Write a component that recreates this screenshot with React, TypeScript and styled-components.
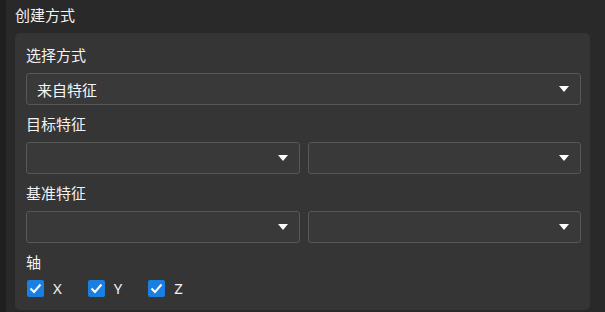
import React from "react";
import styled, { createGlobalStyle } from "styled-components";

const Global = createGlobalStyle`
  html, body { margin: 0; padding: 0; background: #1f1f1f; }
  body { font-family: "Noto Sans", "Noto Sans CJK SC", sans-serif; }
`;

const Shell = styled.div`
  display: flex;
  width: 605px;
  height: 312px;
  overflow: hidden;
`;

const Edge = styled.div`
  width: 6px;
  flex: none;
  background: #1f1f1f;
`;

const Main = styled.div`
  flex: 1;
  background: #292929;
  padding: 0 15px 0 9px;
  display: flex;
  flex-direction: column;
`;

const Title = styled.div`
  color: #f2f2f2;
  font-size: 15px;
  line-height: 20px;
  height: 20px;
  padding-top: 5px;
  margin-bottom: 8px;
`;

const Panel = styled.div`
  background: #353535;
  border-radius: 5px;
  padding: 12px 9px 13px 11px;
  display: flex;
  flex-direction: column;
`;

const Group = styled.div`
  display: flex;
  flex-direction: column;
  gap: 8px;
  & + & { margin-top: 9px; }
`;

const Label = styled.div`
  color: #f2f2f2;
  font-size: 15px;
  line-height: 20px;
  height: 20px;
`;

const Row = styled.div`
  display: flex;
  gap: 8px;
`;

const Select = styled.div<{ $grow?: boolean }>`
  height: 32px;
  flex: ${(p) => (p.$grow ? "1 1 0" : "none")};
  min-width: 0;
  box-sizing: border-box;
  border: 1px solid #575757;
  border-radius: 3px;
  background: #393939;
  display: flex;
  align-items: center;
  padding: 0 11px 0 10px;
  color: #f6f6f6;
  font-size: 15px;
`;

const Value = styled.span`
  flex: 1;
`;

const Arrow = () => (
  <svg width="10" height="6" viewBox="0 0 10 6">
    <path d="M0 0 H10 L5 6 Z" fill="#ffffff" />
  </svg>
);

const Checks = styled.div`
  display: flex;
  gap: 26px;
  padding-left: 1px;
`;

const CheckItem = styled.label`
  display: flex;
  align-items: center;
  gap: 9px;
  color: #f2f2f2;
  font-size: 15px;
  line-height: 17px;
`;

const Box = styled.span`
  width: 17px;
  height: 17px;
  border-radius: 2px;
  background: #1a7fe0;
  display: flex;
  align-items: center;
  justify-content: center;
`;

const Check = ({ label }: { label: string }) => (
  <CheckItem>
    <Box>
      <svg width="13" height="11" viewBox="0 0 13 11">
        <path d="M1.5 5.5 L5 9 L11.5 1.5" stroke="#fff" strokeWidth="2" fill="none" />
      </svg>
    </Box>
    {label}
  </CheckItem>
);

export default function App() {
  return (
    <Shell>
      <Global />
      <Edge />
      <Main>
        <Title>创建方式</Title>
        <Panel>
          <Group>
            <Label>选择方式</Label>
            <Select>
              <Value>来自特征</Value>
              <Arrow />
            </Select>
          </Group>
          <Group>
            <Label>目标特征</Label>
            <Row>
              <Select $grow><Value /><Arrow /></Select>
              <Select $grow><Value /><Arrow /></Select>
            </Row>
          </Group>
          <Group>
            <Label>基准特征</Label>
            <Row>
              <Select $grow><Value /><Arrow /></Select>
              <Select $grow><Value /><Arrow /></Select>
            </Row>
          </Group>
          <Group>
            <Label>轴</Label>
            <Checks>
              <Check label="X" />
              <Check label="Y" />
              <Check label="Z" />
            </Checks>
          </Group>
        </Panel>
      </Main>
    </Shell>
  );
}
